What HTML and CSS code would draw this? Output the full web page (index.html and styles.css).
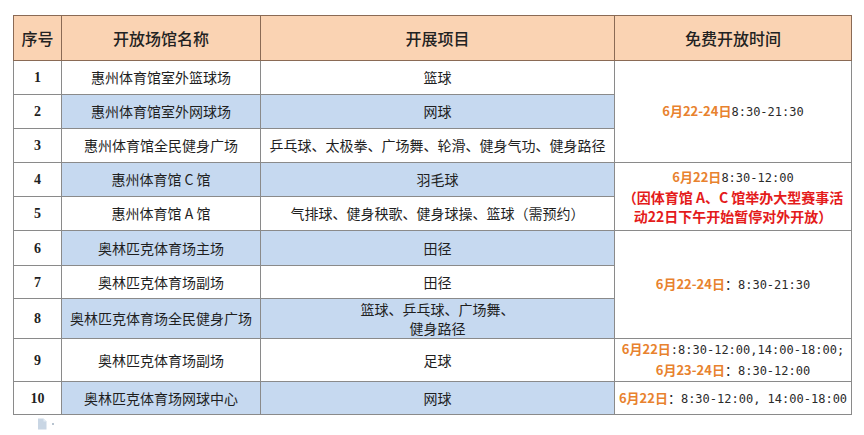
FILE: index.html
```html
<!DOCTYPE html>
<html lang="zh-CN">
<head>
<meta charset="utf-8">
<link rel="stylesheet" href="styles.css">
</head>
<body>
<div class="page">
  <table class="sched">
    <colgroup>
      <col class="c-no"><col class="c-name"><col class="c-item"><col class="c-time">
    </colgroup>
    <thead>
      <tr class="h-row">
        <th>序号</th><th>开放场馆名称</th><th>开展项目</th><th>免费开放时间</th>
      </tr>
    </thead>
    <tbody>
      <tr class="r34">
        <td class="no">1</td><td>惠州体育馆室外篮球场</td><td>篮球</td>
        <td class="time" rowspan="3"><span class="date">6月22-24日</span><span class="mono">8:30-21:30</span></td>
      </tr>
      <tr class="r34 blue">
        <td class="no">2</td><td>惠州体育馆室外网球场</td><td>网球</td>
      </tr>
      <tr class="r34">
        <td class="no">3</td><td>惠州体育馆全民健身广场</td><td>乒乓球、太极拳、广场舞、轮滑、健身气功、健身路径</td>
      </tr>
      <tr class="r34 blue">
        <td class="no">4</td><td>惠州体育馆 C 馆</td><td>羽毛球</td>
        <td class="time lines" rowspan="2"><span class="date">6月22日</span><span class="mono">8:30-12:00</span><br><span class="warn">（因体育馆 A、C 馆举办大型赛事活<br>动22日下午开始暂停对外开放）</span></td>
      </tr>
      <tr class="r34">
        <td class="no">5</td><td>惠州体育馆 A 馆</td><td>气排球、健身秧歌、健身球操、篮球（需预约）</td>
      </tr>
      <tr class="r35 blue">
        <td class="no">6</td><td>奥林匹克体育场主场</td><td>田径</td>
        <td class="time" rowspan="3"><span class="date">6月22-24日</span><span class="sep">：</span><span class="mono">8:30-21:30</span></td>
      </tr>
      <tr class="r33">
        <td class="no">7</td><td>奥林匹克体育场副场</td><td>田径</td>
      </tr>
      <tr class="r40 blue">
        <td class="no">8</td><td>奥林匹克体育场全民健身广场</td><td class="wrap">篮球、乒乓球、广场舞、<br>健身路径</td>
      </tr>
      <tr class="r38">
        <td class="no">9</td><td>奥林匹克体育场副场</td><td>足球</td>
        <td class="time lines"><span class="date">6月22日</span><span class="mono">:8:30-12:00,14:00-18:00;</span><br><span class="date">6月23-24日</span><span class="sep">：</span><span class="mono">8:30-12:00</span></td>
      </tr>
      <tr class="r33 blue">
        <td class="no">10</td><td>奥林匹克体育场网球中心</td><td>网球</td>
        <td class="time"><span class="date">6月22日</span><span class="sep">：</span><span class="mono">8:30-12:00, 14:00-18:00</span></td>
      </tr>
    </tbody>
  </table>
  <div class="foot">
    <svg class="doc" width="10" height="12" viewBox="0 0 10 12"><path d="M1 0.5h5.5l3 3v8h-8.5z" fill="#c9d6e4"/><path d="M6.5 0.5v3h3" fill="#e3ebf3"/></svg>
    <span class="dot"></span>
  </div>
</div>
</body>
</html>
```
FILE: styles.css
```css
html, body {
  margin: 0;
  padding: 0;
  background: #ffffff;
}

.page {
  padding: 15px 0 0 13px;
  font-family: "Noto Sans CJK SC", "Noto Sans", sans-serif;
  color: #1f1f1f;
}

.sched {
  border-collapse: collapse;
  table-layout: fixed;
  width: 838px;
}

.c-no { width: 48px; }
.c-name { width: 199px; }
.c-item { width: 354px; }
.c-time { width: 237px; }

.sched th,
.sched td {
  border: 1px solid #8a8a8a;
  padding: 0;
  text-align: center;
  vertical-align: middle;
  white-space: nowrap;
}

.h-row { height: 45px; }
.sched th {
  background: #fad3b3;
  border-color: #8a6a55;
  font-size: 16px;
  font-weight: 500;
  color: #222222;
}

.r33 { height: 33px; }
.r34 { height: 34px; }
.r35 { height: 35px; }
.r38 { height: 38px; }
.r40 { height: 40px; }

.sched td {
  font-size: 14px;
  line-height: 19px;
  background: #ffffff;
}

.blue td { background: #c6d9f0; }
.blue td.no,
.blue td.time { background: #ffffff; }

.sched td.no {
  font-family: "Liberation Serif", serif;
  font-weight: bold;
  font-size: 14px;
}

.wrap { line-height: 19px; }

.time { font-size: 13px; }
.date {
  color: #e8822e;
  font-weight: bold;
  font-size: 13px;
}
.sep {
  font-size: 13px;
}
.mono {
  font-family: "DejaVu Sans Mono", monospace;
  font-size: 12px;
  color: #2a2a2a;
}
.warn {
  color: #e41b1b;
  font-weight: bold;
  font-size: 14px;
}

.foot {
  display: flex;
  align-items: center;
  gap: 5px;
  padding: 3px 0 0 24px;
}
.doc { display: block; }
.dot {
  width: 2px;
  height: 2px;
  background: #b8c4d0;
}
```
